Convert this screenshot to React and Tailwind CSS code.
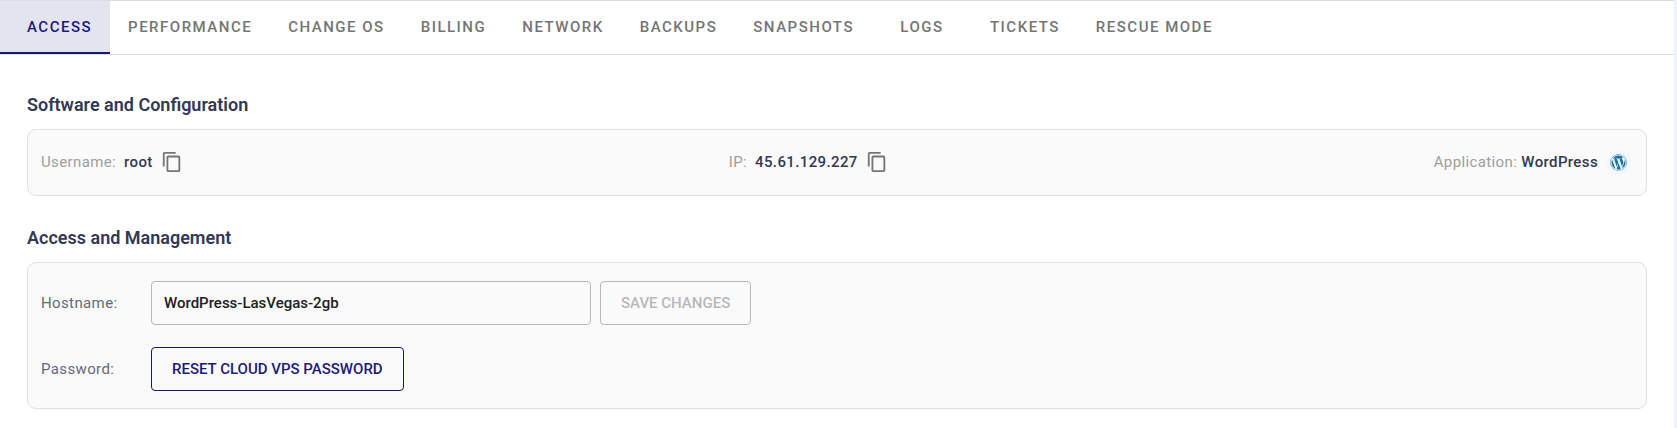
import { useState } from 'react';
import { MdContentCopy } from 'react-icons/md';
import { FaWordpress } from 'react-icons/fa';

const tabs = [
  'Access',
  'Performance',
  'Change OS',
  'Billing',
  'Network',
  'Backups',
  'Snapshots',
  'Logs',
  'Tickets',
  'Rescue Mode',
];

const server = {
  username: 'root',
  ip: '45.61.129.227',
  application: 'WordPress',
  hostname: 'WordPress-LasVegas-2gb',
};

const CopyButton = ({ value, label }) => (
  <button
    type="button"
    aria-label={label}
    onClick={() => navigator.clipboard?.writeText(value)}
    className="pb-px text-[#757575] cursor-pointer"
  >
    <MdContentCopy size={22} />
  </button>
);

const TabBar = ({ active, onChange }) => (
  <nav role="tablist" className="flex border-y border-[#dcdcdc]">
    {tabs.map((tab) => (
      <button
        key={tab}
        type="button"
        role="tab"
        aria-selected={tab === active}
        onClick={() => onChange(tab)}
        className={`min-w-[100px] px-[18px] first:pl-[27px] pt-[15px] pb-[14px] border-b-2 text-[15px] leading-[22px] font-medium uppercase tracking-widest ${
          tab === active
            ? 'bg-[#e4e4f1] border-[#1a1a6c] text-[#1a1a7c]'
            : 'border-transparent text-[#757575]'
        }`}
      >
        {tab}
      </button>
    ))}
  </nav>
);

const Section = ({ title, children }) => (
  <section>
    <h2 className="mb-3 text-lg leading-6 font-semibold text-[#333854]">{title}</h2>
    {children}
  </section>
);

const App = () => {
  const [activeTab, setActiveTab] = useState('Access');
  const [hostname, setHostname] = useState(server.hostname);
  const changed = hostname !== server.hostname;

  return (
    <div className="min-h-screen bg-white border-r-[3px] border-[#f0f4ff] font-[Roboto,sans-serif] text-[15px]">
      <TabBar active={activeTab} onChange={setActiveTab} />

      <main className="flex flex-col gap-[30px] px-[27px] pt-[38px]">
        <Section title="Software and Configuration">
          <div className="flex items-center justify-between rounded-[9px] border border-[#e0e0e0] bg-[#fafafa] pl-[13px] pr-[15px] py-5 font-medium tracking-wide text-[#333854]">
            <div className="flex items-center gap-2">
              <span className="font-normal text-[#9e9e9e]">Username:</span>
              <span>{server.username}</span>
              <CopyButton value={server.username} label="Copy username" />
            </div>
            <div className="flex items-center gap-2">
              <span className="font-normal text-[#9e9e9e]">IP:</span>
              <span>{server.ip}</span>
              <CopyButton value={server.ip} label="Copy IP address" />
            </div>
            <div className="flex items-center gap-2">
              <span>
                <span className="font-normal text-[#9e9e9e]">Application:</span> {server.application}
              </span>
              <span className="flex size-[25px] items-center justify-center rounded-full bg-[#f3f7ff] text-[#21759b]">
                <FaWordpress size={17} />
              </span>
            </div>
          </div>
        </Section>

        <Section title="Access and Management">
          <div className="flex flex-col gap-[22px] rounded-[9px] border border-[#e0e0e0] bg-[#fafafa] px-[13px] pt-[18px] pb-[17px]">
            <div className="flex items-center">
              <label htmlFor="hostname" className="w-[110px] tracking-wide text-[#666a7a]">Hostname:</label>
              <input
                id="hostname"
                type="text"
                value={hostname}
                onChange={(e) => setHostname(e.target.value)}
                className="h-11 w-[440px] rounded border border-[#b8b8b8] px-3 font-medium text-[#212121]"
              />
              <button
                type="button"
                disabled={!changed}
                className="ml-[9px] h-11 rounded border border-[#1a1a6c] px-5 font-medium uppercase text-[#1a1a7c] disabled:border-[#b8b8b8] disabled:text-[#b8b8b8]"
              >
                Save Changes
              </button>
            </div>
            <div className="flex items-center">
              <span className="w-[110px] tracking-wide text-[#666a7a]">Password:</span>
              <button
                type="button"
                className="h-11 rounded border border-[#1a1a6c] px-5 font-medium uppercase text-[#1a1a7c]"
              >
                Reset Cloud VPS Password
              </button>
            </div>
          </div>
        </Section>
      </main>
    </div>
  );
};

export default App;
